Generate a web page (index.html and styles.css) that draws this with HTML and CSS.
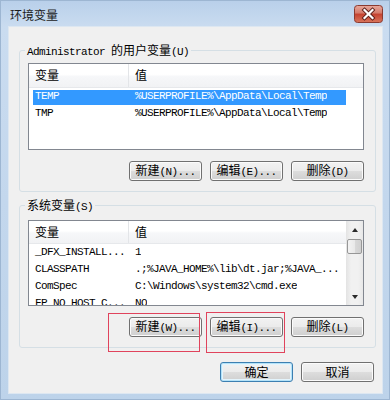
FILE: index.html
```html
<!DOCTYPE html>
<html lang="zh-CN">
<head>
<meta charset="utf-8">
<title>环境变量</title>
<link rel="stylesheet" href="styles.css">
</head>
<body>
<div class="window">
  <div class="titlebar">
    <span class="title">环境变量</span>
    <div class="close">
      <svg width="29" height="18" viewBox="0 0 29 18">
        <defs>
          <linearGradient id="cg" x1="0" y1="0" x2="0" y2="1">
            <stop offset="0" stop-color="#e8a99c"/>
            <stop offset="0.45" stop-color="#d47a6a"/>
            <stop offset="0.5" stop-color="#c4412f"/>
            <stop offset="1" stop-color="#d9765c"/>
          </linearGradient>
        </defs>
        <rect x="0.5" y="0.5" width="28" height="17" rx="3" fill="url(#cg)" stroke="#8a3a30"/>
        <path d="M10.5 5 L18.5 13 M18.5 5 L10.5 13" stroke="#5a1e18" stroke-width="4" stroke-linecap="square"/>
        <path d="M10.5 5 L18.5 13 M18.5 5 L10.5 13" stroke="#ffffff" stroke-width="2.2" stroke-linecap="square"/>
      </svg>
    </div>
  </div>
  <div class="client">
    <fieldset class="group g1">
      <legend><span class="m">Administrator </span>的用户变量<span class="m">(U)</span></legend>
      <div class="listview lv1">
        <div class="lv-header h24"><div class="c1">变量</div><div class="c2">值</div></div>
        <div class="row sel"><div class="c1 m">TEMP</div><div class="c2 m">%USERPROFILE%\AppData\Local\Temp</div></div>
        <div class="row"><div class="c1 m">TMP</div><div class="c2 m">%USERPROFILE%\AppData\Local\Temp</div></div>
      </div>
      <div class="btnrow">
        <button class="btn">新建<span class="m">(N)...</span></button>
        <button class="btn">编辑<span class="m">(E)...</span></button>
        <button class="btn">删除<span class="m">(D)</span></button>
      </div>
    </fieldset>
    <fieldset class="group g2">
      <legend>系统变量<span class="m">(S)</span></legend>
      <div class="listview lv2">
        <div class="lv-main">
          <div class="lv-header h23"><div class="c1">变量</div><div class="c2">值</div></div>
          <div class="row"><div class="c1 m">_DFX_INSTALL...</div><div class="c2 m">1</div></div>
          <div class="row"><div class="c1 m">CLASSPATH</div><div class="c2 m">.;%JAVA_HOME%\lib\dt.jar;%JAVA_...</div></div>
          <div class="row"><div class="c1 m">ComSpec</div><div class="c2 m">C:\Windows\system32\cmd.exe</div></div>
          <div class="row"><div class="c1 m">FP_NO_HOST_C...</div><div class="c2 m">NO</div></div>
        </div>
        <div class="scrollbar">
          <div class="sb-arrow"><span class="tri up"></span></div>
          <div class="sb-thumb"></div>
          <div class="sb-track"></div>
          <div class="sb-arrow"><span class="tri down"></span></div>
        </div>
      </div>
      <div class="btnrow">
        <button class="btn">新建<span class="m">(W)...</span></button>
        <button class="btn">编辑<span class="m">(I)...</span></button>
        <button class="btn">删除<span class="m">(L)</span></button>
      </div>
    </fieldset>
    <div class="footer">
      <button class="btn default">确定</button>
      <button class="btn">取消</button>
    </div>
    <div class="mark mark1"></div>
    <div class="mark mark2"></div>
  </div>
</div>
</body>
</html>
```

FILE: styles.css
```css
html, body {
  margin: 0;
  padding: 0;
}
body {
  width: 390px;
  height: 400px;
  overflow: hidden;
  font-family: "Noto Sans CJK SC", "Liberation Sans", sans-serif;
  font-size: 12px;
  color: #000;
}
.m {
  font-family: "Liberation Mono", "Noto Sans CJK SC", monospace;
  font-size: 11px;
  letter-spacing: -0.6px;
}
.window {
  width: 390px;
  height: 400px;
  box-sizing: border-box;
  border: 1px solid #9db6d2;
  background: linear-gradient(180deg, #b9d0ea 0px, #cadcf0 26px, #c3d7ed 200px, #bdd3ea 400px);
  display: flex;
  flex-direction: column;
}
.titlebar {
  height: 25px;
  display: flex;
  justify-content: space-between;
  align-items: flex-start;
  padding: 0 6px 0 9px;
}
.title {
  line-height: 14px;
  margin-top: 7px;
  font-size: 12px;
  color: #1a1a1a;
}
.close {
  margin-top: 4px;
  width: 29px;
  height: 18px;
}
.close svg {
  display: block;
}
.client {
  position: relative;
  margin: 0 6px 0 7px;
  height: 368px;
  box-sizing: border-box;
  background: #f0f0f0;
  border: 1px solid #dde7f1;
  display: flex;
  flex-direction: column;
}
.group {
  margin: 0 6px 0 10px;
  padding: 6px 11px 10px 8px;
  border: 1px solid #d5dfe5;
  border-radius: 3px;
  min-width: 0;
}
.g1 {
  margin-top: 16px;
}
.g2 {
  margin-top: 6px;
  padding-top: 8px;
}
.group legend {
  padding: 0 2px;
  margin-left: -3px;
  line-height: 14px;
  height: 14px;
  color: #000;
}
.listview {
  box-sizing: border-box;
  border: 1px solid #828790;
  background: #fff;
  overflow: hidden;
}
.lv1 {
  height: 87px;
}
.lv2 {
  height: 86px;
  display: flex;
}
.lv-main {
  flex: 1;
  min-width: 0;
  overflow: hidden;
}
.lv-header {
  display: flex;
  box-sizing: border-box;
  background: linear-gradient(180deg, #ffffff 0%, #ffffff 45%, #f6f7f9 55%, #f1f2f4 100%);
  border-bottom: 1px solid #e6e8eb;
}
.h24 { height: 24px; }
.h23 { height: 23px; }
.lv-header .c1,
.lv-header .c2 {
  line-height: 22px;
}
.lv-header .c1 {
  border-right: 1px solid #e3e5e8;
  width: 93px;
}
.c1 {
  width: 94px;
  padding-left: 6px;
  flex: none;
  white-space: nowrap;
  overflow: hidden;
}
.c2 {
  padding-left: 6px;
  white-space: nowrap;
  overflow: hidden;
}
.row {
  display: flex;
  height: 17px;
  line-height: 17px;
}
.row.sel {
  color: #fff;
  background: linear-gradient(#3399ff, #3399ff) no-repeat;
  background-position: 4px 2px;
  background-size: 313px 15px;
}
.scrollbar {
  width: 17px;
  flex: none;
  display: flex;
  flex-direction: column;
  background: linear-gradient(90deg, #e3e3e3 0%, #f1f1f1 30%, #f1f1f1 70%, #e8e8e8 100%);
}
.sb-arrow {
  height: 17px;
  display: flex;
  align-items: center;
  justify-content: center;
}
.sb-track {
  flex: 1;
}
.sb-thumb {
  margin: 1px 1px 0 1px;
  height: 15px;
  box-sizing: border-box;
  border: 1px solid #979797;
  border-radius: 2px;
  background: linear-gradient(90deg, #f3f3f3 0%, #e9e9e9 50%, #d9d9d9 51%, #d0d0d0 100%);
}
.tri {
  width: 0;
  height: 0;
  border-left: 3.5px solid transparent;
  border-right: 3.5px solid transparent;
}
.tri.up {
  border-bottom: 4px solid #2b2b2b;
}
.tri.down {
  border-top: 4px solid #2b2b2b;
}
.btnrow {
  display: flex;
  justify-content: flex-end;
  gap: 8px;
  margin-top: 11px;
}
.btn {
  width: 73px;
  height: 20px;
  box-sizing: border-box;
  padding: 0;
  border: 1px solid #707070;
  border-radius: 3px;
  background: linear-gradient(180deg, #f2f2f2 0%, #ebebeb 50%, #dddddd 51%, #cfcfcf 100%);
  box-shadow: inset 0 0 0 1px #fbfbfb;
  font-family: "Noto Sans CJK SC", sans-serif;
  font-size: 12px;
  line-height: 16px;
  color: #000;
  white-space: nowrap;
}
.btn.default {
  border-color: #3c7fb1;
  box-shadow: inset 0 0 0 1px #b4e2f8, inset 0 0 0 2px #e4f4fc;
}
.footer {
  display: flex;
  justify-content: flex-end;
  gap: 8px;
  margin: 14px 8px 0 0;
}
.mark {
  position: absolute;
  box-sizing: border-box;
  border: 1px solid #e0435c;
}
.mark1 {
  left: 99px;
  top: 286px;
  width: 92px;
  height: 39px;
}
.mark2 {
  left: 197px;
  top: 285px;
  width: 79px;
  height: 41px;
}
```
